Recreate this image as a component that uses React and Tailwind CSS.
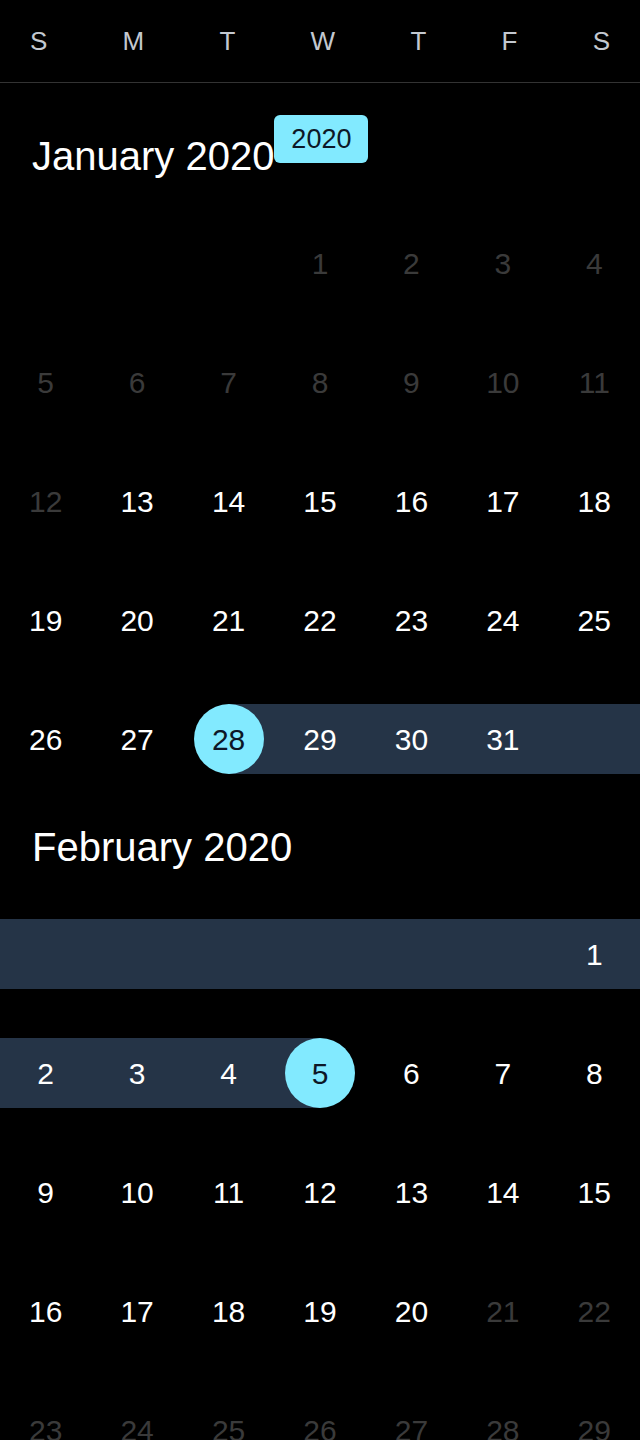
import React from 'react'

const WEEKDAYS = ['S', 'M', 'T', 'W', 'T', 'F', 'S']

// range of the selection, as [month, day]
const RANGE_START = [0, 28]
const RANGE_END = [1, 5]

const months = [
  { name: 'January 2020', month: 0, offset: 3, days: 31, badge: '2020' },
  { name: 'February 2020', month: 1, offset: 6, days: 29 },
]

function key(m, d) {
  return m * 100 + d
}

function isDisabled(m, d) {
  if (m === 0) return d <= 12
  return d >= 21
}

function buildWeeks(offset, days) {
  const cells = []
  for (let i = 0; i < offset; i++) cells.push(null)
  for (let d = 1; d <= days; d++) cells.push(d)
  while (cells.length % 7) cells.push(null)
  const weeks = []
  for (let i = 0; i < cells.length; i += 7) weeks.push(cells.slice(i, i + 7))
  return weeks
}

export default function App() {
  const start = key(...RANGE_START)
  const end = key(...RANGE_END)

  return (
    <div className="min-h-screen bg-black text-white font-['Liberation_Sans',Arial,sans-serif] overflow-hidden">
      {/* Weekday header */}
      <div className="flex justify-between items-center h-[83px] px-[30px] border-b border-[#333333] text-[26px] text-[#c3c8d0]">
        {WEEKDAYS.map((d, i) => (
          <span key={i}>{d}</span>
        ))}
      </div>

      {months.map((mo) => {
        const weeks = buildWeeks(mo.offset, mo.days)
        return (
          <section key={mo.name}>
            <div className="flex items-start h-[145px] pl-[32px]">
              <h2 className="mt-[53px] text-[40px] leading-none font-normal">{mo.name}</h2>
              {mo.badge && (
                <span className="mt-[32px] w-[94px] h-[48px] flex items-center justify-center rounded-[6px] bg-[#82eaff] text-[#0d1726] text-[27px] leading-none">
                  {mo.badge}
                </span>
              )}
            </div>

            <div className="flex flex-col gap-[49px]">
              {weeks.map((week, wi) => (
                <div key={wi} className="grid grid-cols-7 h-[70px]">
                  {week.map((d, ci) => {
                    // empty cells sit before day 1 or after the last day
                    let k
                    if (d === null) {
                      k = wi === 0 ? key(mo.month, 0) + 0.5 : key(mo.month, mo.days) + 0.5
                    } else {
                      k = key(mo.month, d)
                    }
                    const inRange = k > start && k < end
                    const isStart = k === start
                    const isEnd = k === end
                    let bg = ''
                    if (inRange) bg = 'bg-[#253447]'
                    else if (isStart) bg = 'bg-[linear-gradient(to_right,transparent_50%,#253447_50%)]'
                    else if (isEnd) bg = 'bg-[linear-gradient(to_right,#253447_50%,transparent_50%)]'

                    const selected = isStart || isEnd
                    let color = 'text-white'
                    if (d !== null && isDisabled(mo.month, d)) color = 'text-[#3a3a3a]'

                    return (
                      <div key={ci} className={`flex items-center justify-center ${bg}`}>
                        {d !== null &&
                          (selected ? (
                            <span className="w-[70px] h-[70px] rounded-full bg-[#82eaff] text-[#0d1726] flex items-center justify-center text-[30px] leading-none pt-[2px]">
                              {d}
                            </span>
                          ) : (
                            <span className={`text-[30px] leading-none pt-[2px] ${color}`}>{d}</span>
                          ))}
                      </div>
                    )
                  })}
                </div>
              ))}
            </div>
          </section>
        )
      })}
    </div>
  )
}
